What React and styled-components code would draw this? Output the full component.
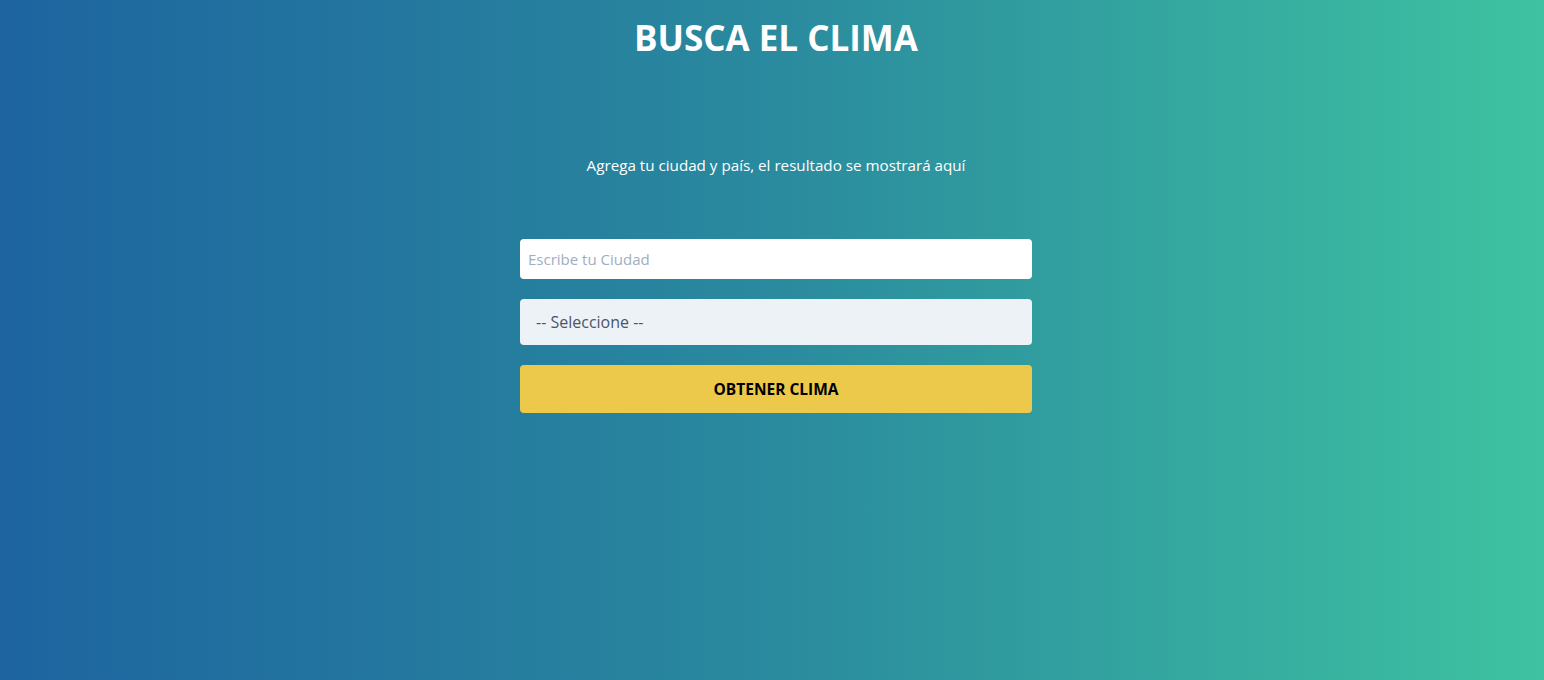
import styled, { createGlobalStyle } from "styled-components";

const GlobalStyle = createGlobalStyle`
  html, body { margin: 0; padding: 0; }
  body {
    font-family: "Open Sans", "Noto Sans", sans-serif;
  }
  * { box-sizing: border-box; }
`;

const Page = styled.div`
  min-height: 680px;
  padding-left: 8px;
  background: linear-gradient(90deg, #1d64a0 0%, #2a8a9e 50%, #3ec2a1 100%);
  display: flex;
  flex-direction: column;
  align-items: center;
  color: #fff;
`;

const Title = styled.h1`
  margin: 14px 0 0;
  font-size: 35px;
  font-weight: 700;
  line-height: 48px;
`;

const Message = styled.p`
  margin: 92px 0 0;
  font-size: 15.2px;
  line-height: 22px;
`;

const Form = styled.form`
  width: 512px;
  margin-top: 63px;
  display: flex;
  flex-direction: column;
  gap: 20px;
`;

const Input = styled.input`
  width: 100%;
  height: 40px;
  border: none;
  border-radius: 4px;
  padding: 0 8px;
  font-family: inherit;
  font-size: 15px;
  color: #2d3748;
  background: #fff;
  outline: none;
  &::placeholder { color: #a0aec0; }
`;

const Select = styled.select`
  width: 100%;
  height: 46px;
  border: none;
  border-radius: 4px;
  padding: 0 16px;
  font-family: inherit;
  font-size: 16px;
  color: #4a5568;
  background: #edf2f7;
  appearance: none;
  outline: none;
`;

const Button = styled.button`
  width: 100%;
  height: 48px;
  border: none;
  border-radius: 4px;
  background: #ecc94b;
  color: #000;
  font-family: inherit;
  font-size: 15.5px;
  font-weight: 700;
  text-transform: uppercase;
  cursor: pointer;
`;

export default function App() {
  return (
    <>
      <GlobalStyle />
      <Page>
        <Title>BUSCA EL CLIMA</Title>
        <Message>Agrega tu ciudad y país, el resultado se mostrará aquí</Message>
        <Form onSubmit={(e) => e.preventDefault()}>
          <Input type="text" placeholder="Escribe tu Ciudad" />
          <Select defaultValue="">
            <option value="">-- Seleccione --</option>
            <option value="US">Estados Unidos</option>
            <option value="MX">México</option>
            <option value="AR">Argentina</option>
            <option value="CO">Colombia</option>
            <option value="CR">Costa Rica</option>
            <option value="ES">España</option>
            <option value="PE">Perú</option>
          </Select>
          <Button type="submit">Obtener Clima</Button>
        </Form>
      </Page>
    </>
  );
}
